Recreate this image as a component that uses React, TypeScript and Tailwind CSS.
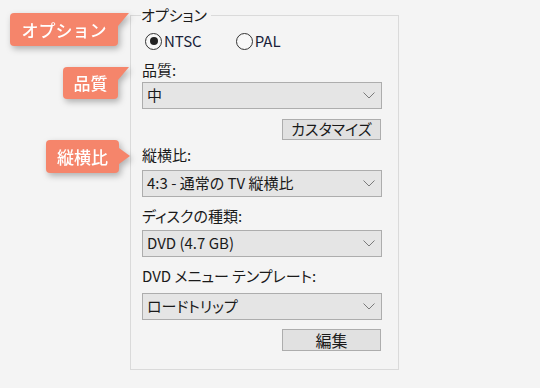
import React from 'react';

const jp = "font-['Noto_Sans_CJK_JP','Noto_Sans',sans-serif] [font-feature-settings:'palt']";

interface Callout {
  text: string;
  box: string;
  tail: 'top' | 'side';
}

const callouts: Callout[] = [
  { text: 'オプション', box: 'left-[10px] top-[13px] w-[108px] h-[33px]', tail: 'top' },
  { text: '品質', box: 'left-[63px] top-[67px] w-[55px] h-[32px]', tail: 'top' },
  { text: '縦横比', box: 'left-[46px] top-[140px] w-[73px] h-[33px]', tail: 'side' }
];

function Tag({ c }: { c: Callout }) {
  return (
    <div className={`absolute ${c.box} drop-shadow-[2px_3px_3px_rgba(0,0,0,0.28)]`}>
      <div
        className={`flex h-full w-full items-center justify-center bg-[#f5856b] text-[17px] font-medium text-white [font-feature-settings:normal] ${
          c.tail === 'top' ? 'rounded-[4px] rounded-tr-none' : 'rounded-[4px]'
        }`}
      >
        {c.text}
      </div>
      {c.tail === 'top' ? (
        <svg className="absolute left-full top-0" width="11" height="14" viewBox="0 0 11 14">
          <polygon points="0,0 11,0 0,13" fill="#f5856b" />
        </svg>
      ) : (
        <svg className="absolute left-full top-[8px]" width="11" height="16" viewBox="0 0 11 16">
          <polygon points="0,0 11,8 0,16" fill="#f5856b" />
        </svg>
      )}
    </div>
  );
}

function Radio({ label, checked }: { label: string; checked?: boolean }) {
  return (
    <div className="flex items-center gap-[2px]">
      <div className="flex h-[17px] w-[17px] items-center justify-center rounded-full border-[1.5px] border-[#333333] bg-[#f8f8f8]">
        {checked && <div className="h-[8px] w-[8px] rounded-full bg-[#222222]" />}
      </div>
      <span className="text-[15px] leading-[18px] text-[#1a1f3a]">{label}</span>
    </div>
  );
}

function Select({ value, className = '' }: { value: string; className?: string }) {
  return (
    <div
      className={`flex h-[27px] w-[240px] items-center justify-between border border-[#adadad] bg-[#e5e5e5] pl-[4px] pr-[6px] text-[15px] text-[#1a1a1a] ${className}`}
    >
      <span>{value}</span>
      <svg width="12" height="7" viewBox="0 0 12 7">
        <polyline points="0.5,0.5 6,6 11.5,0.5" fill="none" stroke="#7a7a7a" strokeWidth="1" />
      </svg>
    </div>
  );
}

function Button({ label, className = '' }: { label: string; className?: string }) {
  return (
    <div
      className={`ml-[140px] flex w-[99px] items-center justify-center border border-[#adadad] bg-[#e1e1e1] text-[15px] text-[#1a1a1a] ${className}`}
    >
      {label}
    </div>
  );
}

export default function App() {
  return (
    <div className={`relative h-[388px] w-[540px] overflow-hidden bg-[#f4f4f4] ${jp}`}>
      {/* Options group */}
      <div className="relative ml-[130px] mt-[15px] h-[355px] w-[269px] border border-[#dadada] bg-[#f4f4f4] pl-[11px]">
        <span className="absolute left-[10px] top-[-11px] bg-[#f4f4f4] pr-[4px] text-[15px] leading-[20px] text-[#1a1a1a]">
          オプション
        </span>

        <div className="flex flex-col pt-[16px]">
          <div className="flex h-[18px] items-center gap-[34px] pl-[3px]">
            <Radio label="NTSC" checked />
            <Radio label="PAL" />
          </div>

          <div className="mt-[10px] h-[20px] text-[15px] leading-[20px] text-[#1a1a1a]">品質:</div>
          <Select value="中" className="mt-[2px]" />
          <Button label="カスタマイズ" className="mt-[10px] h-[21px]" />

          <div className="mt-[5px] h-[20px] text-[15px] leading-[20px] text-[#1a1a1a]">縦横比:</div>
          <Select value="4:3 - 通常の TV 縦横比" className="mt-[5px]" />

          <div className="mt-[9px] h-[20px] text-[15px] leading-[20px] text-[#1a1a1a]">ディスクの種類:</div>
          <Select value="DVD (4.7 GB)" className="mt-[4px]" />

          <div className="mt-[9px] h-[20px] text-[15px] leading-[20px] text-[#1a1a1a]">DVD メニュー テンプレート:</div>
          <Select value="ロードトリップ" className="mt-[7px]" />
          <Button label="編集" className="mt-[9px] h-[22px] text-[16px]" />
        </div>
      </div>

      {callouts.map((c) => (
        <Tag key={c.text} c={c} />
      ))}
    </div>
  );
}
